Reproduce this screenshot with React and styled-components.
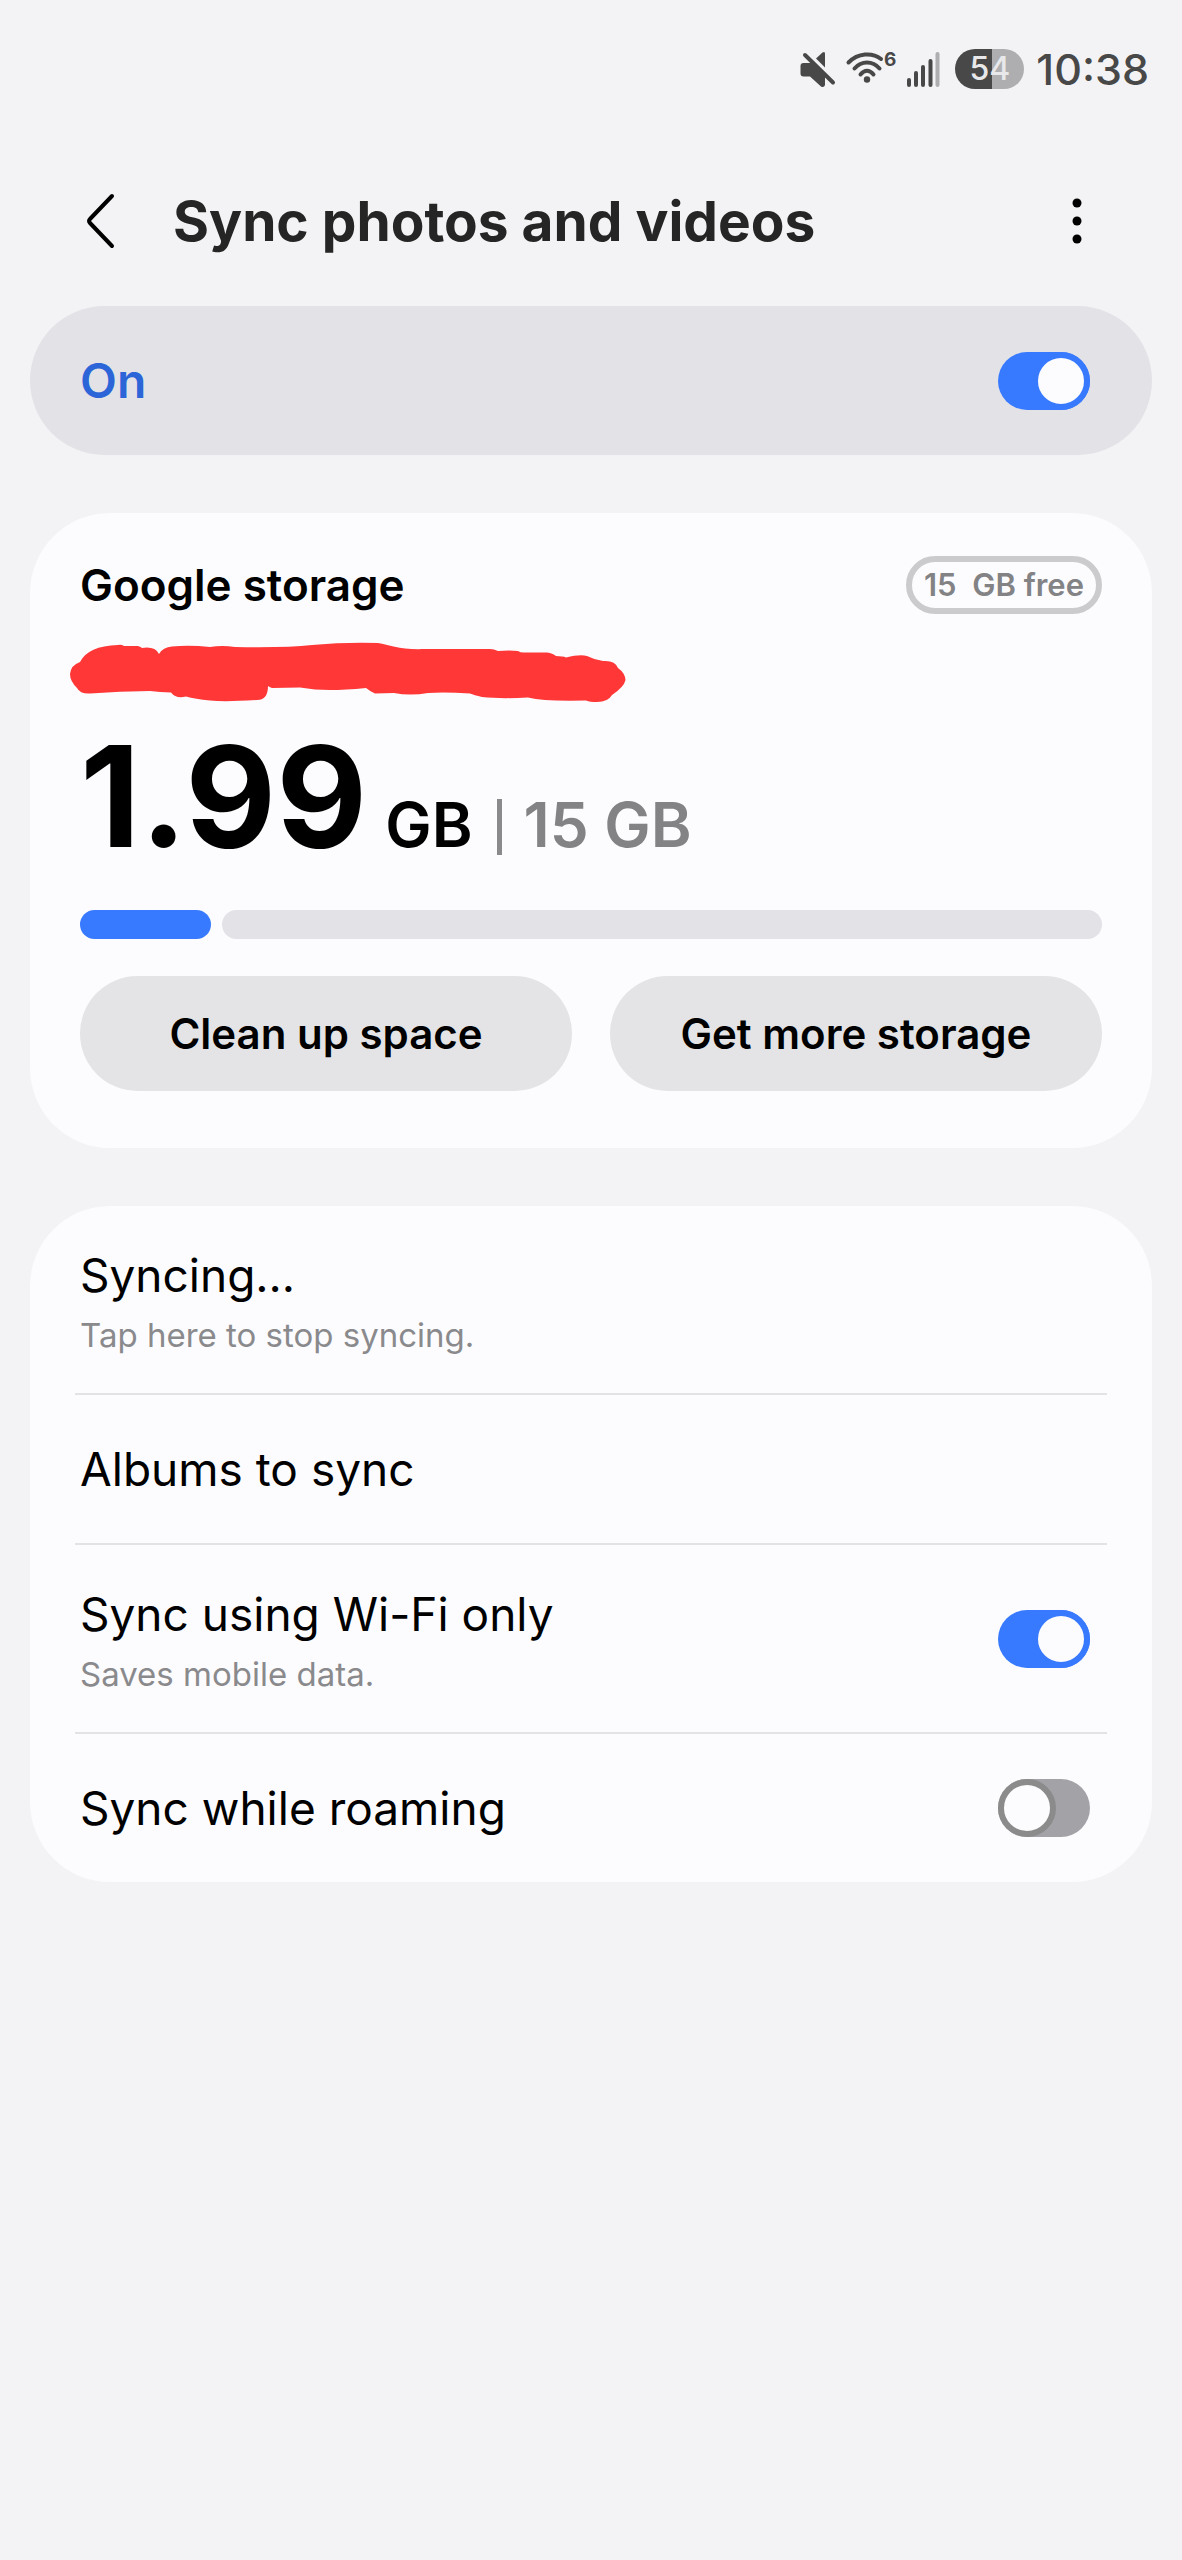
import React, { useState } from 'react'
import styled, { createGlobalStyle } from 'styled-components'

const GlobalStyle = createGlobalStyle`
  *,
  *::before {
    box-sizing: border-box;
  }

  body {
    margin: 0;
    background: #f3f3f5;
    color: #000;
    font-family: Inter, 'Liberation Sans', sans-serif;
  }

  button {
    margin: 0;
    padding: 0;
    border: 0;
    background: none;
    color: inherit;
    font: inherit;
    cursor: pointer;
  }
`

const Page = styled.div`
  min-height: 100vh;
`

const StatusBar = styled.div`
  display: flex;
  align-items: center;
  justify-content: flex-end;
  gap: 12px;
  padding: 41px 33px 0 0;
  color: #484848;
`

const StatusIcons = styled.svg`
  display: block;
  width: 144px;
  height: 40px;
`

const Battery = styled.span`
  width: 69px;
  border-radius: 20px;
  background: linear-gradient(90deg, #484848 54%, #aeaeb0 54%);
  color: #e8e8ea;
  font-size: 32px;
  font-weight: 500;
  line-height: 40px;
  text-align: center;
`

const Clock = styled.time`
  font-size: 43px;
  font-weight: 500;
  line-height: 56px;
`

const Header = styled.header`
  display: flex;
  align-items: center;
  padding: 85px 81px 46px;
`

const HeaderButton = styled.button`
  display: flex;
  width: ${props => (props.$wide ? '92px' : '48px')};
  justify-content: ${props => (props.$wide ? 'flex-start' : 'center')};
`

const Title = styled.h1`
  flex: 1;
  margin: 0;
  color: #252525;
  font-size: 55px;
  font-weight: 700;
  line-height: 78px;
`

const Main = styled.main`
  display: flex;
  flex-direction: column;
  gap: 58px;
  padding: 0 30px;
`

const MasterSwitch = styled.label`
  display: flex;
  align-items: center;
  justify-content: space-between;
  height: 149px;
  padding: 0 62px 0 50px;
  border-radius: 75px;
  background: #e3e2e7;
  color: #2c65d8;
  font-size: 48px;
  font-weight: 600;
`

const Switch = styled.input.attrs({ type: 'checkbox', role: 'switch' })`
  appearance: none;
  display: flex;
  flex: none;
  justify-content: ${props => (props.checked ? 'flex-end' : 'flex-start')};
  width: 92px;
  height: 58px;
  margin: 0;
  border-radius: 29px;
  background: ${props => (props.checked ? '#387aff' : '#a3a2a7')};
  cursor: pointer;

  &::before {
    content: '';
    width: 58px;
    height: 58px;
    border: 6px solid ${props => (props.checked ? '#387aff' : '#8b8b8b')};
    border-radius: 50%;
    background: #fcfcff;
  }
`

const Card = styled.section`
  border-radius: 80px;
  background: #fcfcff;
`

const StorageCard = styled(Card)`
  padding: 43px 50px 57px;
`

const StorageHead = styled.div`
  display: flex;
  align-items: center;
  justify-content: space-between;
`

const StorageTitle = styled.h2`
  margin: 0;
  font-size: 44px;
  font-weight: 600;
  line-height: 58px;
`

const Badge = styled.span`
  padding: 0 12px;
  border: 6px solid #cbcbcd;
  border-radius: 29px;
  color: #838385;
  font-size: 31px;
  font-weight: 600;
  line-height: 46px;
  white-space: pre;
`

const Scribble = styled.svg`
  display: block;
  width: 560px;
  height: 64px;
  margin: 26px 0 0 -12px;
`

const Usage = styled.div`
  display: flex;
  align-items: baseline;
  margin-top: 14px;
  font-size: 62px;
  font-weight: 600;
  line-height: 156px;
`

const Used = styled.strong`
  margin-right: 18px;
  font-size: 140px;
  font-weight: 700;
`

const UsageDivider = styled.span`
  align-self: center;
  width: 5px;
  height: 56px;
  margin: 32px 22px 0 24px;
  background: #8a8a8c;
`

const Total = styled.span`
  color: #838385;
`

const Meter = styled.div`
  display: flex;
  gap: 11px;
  margin-top: 7px;
`

const MeterPart = styled.div`
  flex: ${props => props.$share} 0 0;
  height: 29px;
  border-radius: 15px;
  background: ${props => (props.$filled ? '#387aff' : '#e3e2e7')};
`

const Actions = styled.div`
  display: grid;
  grid-template-columns: 1fr 1fr;
  gap: 38px;
  margin-top: 37px;
`

const ActionButton = styled.button`
  && {
    height: 115px;
    border-radius: 58px;
    background: #e4e4e6;
    font-size: 42px;
    font-weight: 600;
  }
`

const List = styled(Card)`
  padding: 0 45px;
`

const Row = styled.div`
  display: flex;
  align-items: center;
  justify-content: space-between;
  width: 100%;
  min-height: ${props => (props.$tall ? '189px' : '148px')};
  padding: 0 17px 0 5px;
  text-align: left;
  cursor: pointer;

  &&:not(:last-child) {
    min-height: ${props => (props.$tall ? '189px' : '150px')};
    padding: 0 17px 0 5px;
    border-bottom: 2px solid #e3e3e5;
  }
`

const RowText = styled.span`
  display: flex;
  flex-direction: column;
  padding-top: 6px;
`

const RowTitle = styled.span`
  font-size: 46px;
  line-height: 64px;
`

const RowNote = styled.span`
  color: #8a8a8d;
  font-size: 33px;
  line-height: 56px;
`

const USED = 1.99
const TOTAL = 15
const PERCENT = Math.floor((USED / TOTAL) * 100)

function StatusGlyphs() {
  return (
    <StatusIcons viewBox="800 48 144 40" fill="none" aria-hidden="true">
      <g fill="currentColor">
        <path d="M804.500 62H814l12 13v9q-1 3-4 1.500L811 75.500h-6.500q-3 0-3-3v-7.500q0-3 3-3z" />
        <path d="M817 57.500l6.500-6q2.500-1.500 2.500 1v14z" />
        <circle cx="868" cy="78.500" r="3.200" />
        <rect x="908" y="77" width="4" height="9" rx="2" />
        <rect x="915" y="70" width="4" height="16" rx="2" />
        <rect x="922" y="64" width="4" height="22" rx="2" />
        <rect x="929.500" y="58" width="4" height="28" rx="2" />
      </g>
      <rect x="936.500" y="51" width="4" height="35" rx="2" fill="#aeaeb0" />
      <g stroke="currentColor" strokeWidth="4" strokeLinecap="round">
        <path d="M806 54l28 27.500" />
        <path d="M849.500 61.500C859 52 873 51 882 58" />
        <path d="M855.500 67.500c7-8 18-8 25 0" />
        <path d="M861.500 73.500c4-5 9-5 13 0" />
      </g>
      <text x="885" y="65" fill="currentColor" fontSize="19" fontWeight="700">
        6
      </text>
    </StatusIcons>
  )
}

function Toggle({ id, on, onChange }) {
  return (
    <Switch id={id} checked={on} onChange={e => onChange(e.target.checked)} />
  )
}

export default function App() {
  const [sync, setSync] = useState(true)
  const [wifiOnly, setWifiOnly] = useState(true)
  const [roaming, setRoaming] = useState(false)

  return (
    <Page>
      <GlobalStyle />
      <StatusBar>
        <StatusGlyphs />
        <Battery>54</Battery>
        <Clock>10:38</Clock>
      </StatusBar>
      <Header>
        <HeaderButton $wide aria-label="Back">
          <svg width="36" height="60" viewBox="0 0 36 60" fill="none">
            <path
              d="M31 5L9 28q-2 2 0 4l22 23"
              stroke="#000"
              strokeWidth="4"
              strokeLinecap="round"
            />
          </svg>
        </HeaderButton>
        <Title>Sync photos and videos</Title>
        <HeaderButton aria-label="More options">
          <svg width="12" height="48" viewBox="0 0 12 48">
            <circle cx="6" cy="6" r="4.500" />
            <circle cx="6" cy="24" r="4.500" />
            <circle cx="6" cy="42" r="4.500" />
          </svg>
        </HeaderButton>
      </Header>
      <Main>
        <MasterSwitch htmlFor="sync">
          {sync ? 'On' : 'Off'}
          <Toggle id="sync" on={sync} onChange={setSync} />
        </MasterSwitch>
        <StorageCard>
          <StorageHead>
            <StorageTitle>Google storage</StorageTitle>
            <Badge>15  GB free</Badge>
          </StorageHead>
          <Scribble viewBox="68 640 560 64" aria-hidden="true">
            <path
              fill="#ff3737"
              d="M70 674Q71 665 80 662Q88 646 118 645Q121 644 124 646H138Q141 647 142 648Q155 646 159 654Q163 647 172 646.500Q190 645 210 647Q222 645 235 647Q285 648 312 645Q345 642 378 643C390 645 400 650 425 649H490Q494 649 498 651Q510 650 518 651Q521 653 525 652.500H545Q551 652 556 656Q563 656 566 657.500Q580 654 587 656Q595 660 603 661Q615 660 618 668Q625 673 625.500 680Q624 687 612 695Q608 702 597 702Q590 702 586 700.500Q560 701 545 700Q535 699 528 697.500Q500 699 482 697Q474 695 470 693.500Q445 692 428 693Q410 696 394 693Q384 693 375 693.500Q371 692 366 688Q345 690 330 690Q315 690 300 687.500L272 688Q269 687 268 686Q268 700 257 700Q225 702 210 700.500Q195 699 186 696.500Q176 699 171 692.500Q160 692 150 691Q120 691 90 693.500Q80 694 77 688Q70 681 70 674Z"
            />
          </Scribble>
          <Usage>
            <Used>{USED}</Used>
            GB
            <UsageDivider />
            <Total>{TOTAL} GB</Total>
          </Usage>
          <Meter>
            <MeterPart $filled $share={PERCENT} />
            <MeterPart $share={100 - PERCENT} />
          </Meter>
          <Actions>
            <ActionButton>Clean up space</ActionButton>
            <ActionButton>Get more storage</ActionButton>
          </Actions>
        </StorageCard>
        <List>
          <Row as="button" $tall>
            <RowText>
              <RowTitle>Syncing...</RowTitle>
              <RowNote>Tap here to stop syncing.</RowNote>
            </RowText>
          </Row>
          <Row as="button">
            <RowTitle>Albums to sync</RowTitle>
          </Row>
          <Row as="label" htmlFor="wifi-only" $tall>
            <RowText>
              <RowTitle>Sync using Wi-Fi only</RowTitle>
              <RowNote>Saves mobile data.</RowNote>
            </RowText>
            <Toggle id="wifi-only" on={wifiOnly} onChange={setWifiOnly} />
          </Row>
          <Row as="label" htmlFor="roaming">
            <RowTitle>Sync while roaming</RowTitle>
            <Toggle id="roaming" on={roaming} onChange={setRoaming} />
          </Row>
        </List>
      </Main>
    </Page>
  )
}
